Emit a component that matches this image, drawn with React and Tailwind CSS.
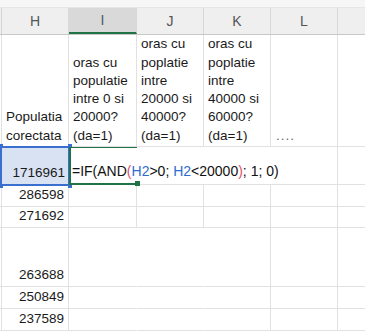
const cols = [
  { key: "H", w: "w-[67px]" },
  { key: "I", w: "w-[68px]" },
  { key: "J", w: "w-[67px]" },
  { key: "K", w: "w-[67px]" },
  { key: "L", w: "w-[67px]" },
];

const headerText = {
  H: ["Populatia", "corectata"],
  I: ["oras cu", "populatie", "intre 0 si", "20000?", "(da=1)"],
  J: ["oras cu", "poplatie", "intre", "20000 si", "40000?", "(da=1)"],
  K: ["oras cu", "poplatie", "intre", "40000 si", "60000?", "(da=1)"],
  L: ["...."],
};

const rows = [
  { h: "h-[22px]", v: "286598" },
  { h: "h-[21px]", v: "271692" },
  { h: "h-[59px]", v: "263688" },
  { h: "h-[22px]", v: "250849" },
  { h: "h-[22px]", v: "237589" },
];

function Cell({ w, h, className = "", children }) {
  return (
    <div
      className={`${w} ${h} shrink-0 border-r border-b border-[#e1e1e1] ${className}`}
    >
      {children}
    </div>
  );
}

export default function App() {
  return (
    <div className="w-[365px] h-[333px] overflow-hidden bg-white font-['Liberation_Sans',Arial,sans-serif] text-[13.5px] text-[#1a1a1a]">
      {/* top strip */}
      <div className="h-[8px] bg-[#f6f6f6] border-b border-[#e6e6e6]" />

      {/* column letters */}
      <div className="flex h-[27px] bg-[#efefef] border-b border-[#c8c8c8]">
        <div className="w-[2px] shrink-0 border-r border-[#d4d4d4]" />
        {cols.map((c) => (
          <div
            key={c.key}
            className={`${c.w} shrink-0 flex items-center justify-center border-r border-[#d8d8d8] text-[14px] ${
              c.key === "I"
                ? "bg-[#d9d9d9] text-[#4b5a6b] border-b-2 border-b-[#217346]"
                : "text-[#555]"
            }`}
          >
            {c.key}
          </div>
        ))}
        <div className="flex-1" />
      </div>

      {/* row 1: headings */}
      <div className="flex">
        <Cell w="w-[2px]" h="h-[112px]" />
        {cols.map((c) => (
          <Cell
            key={c.key}
            w={c.w}
            h="h-[112px]"
            className="flex flex-col justify-end px-[4px] pb-[1px] leading-[18.3px]"
          >
            {headerText[c.key].map((t, i) => (
              <div key={i} className={c.key === "L" ? "pl-[1px] text-[#666] tracking-[1px]" : ""}>
                {t}
              </div>
            ))}
          </Cell>
        ))}
        <Cell w="flex-1" h="h-[112px]" className="border-r-0" />
      </div>

      {/* row 2: formula */}
      <div className="flex">
        <Cell w="w-[2px]" h="h-[38px]" className="bg-[#c9d7ee]" />
        <div className="relative w-[67px] h-[38px] shrink-0 bg-[#d9e2f3] flex items-end justify-end pr-[4px] pb-[2px]">
          1716961
          <div className="absolute -left-[2px] -top-[1px] -right-[1px] -bottom-[1px] border-2 border-[#3a6fd0]" />
          <div className="absolute -left-[3px] -top-[3px] w-[4px] h-[4px] bg-[#3a6fd0]" />
          <div className="absolute -left-[3px] -bottom-[3px] w-[4px] h-[4px] bg-[#3a6fd0]" />
          <div className="absolute -right-[3px] -top-[3px] w-[4px] h-[4px] bg-[#3a6fd0]" />
          <div className="absolute -right-[3px] -bottom-[3px] w-[4px] h-[4px] bg-[#3a6fd0]" />
        </div>
        <div className="relative z-10 w-[68px] h-[38px] shrink-0 border-l-2 border-t border-b-2 border-[#217346] flex items-end pb-[1px] pl-[1px]">
          <span className="whitespace-nowrap text-[14px] text-[#111]">
            =IF(AND<span className="text-[#e0506a]">(</span>
            <span className="text-[#2f6ccf]">H2</span>&gt;0;{" "}
            <span className="text-[#2f6ccf]">H2</span>&lt;20000
            <span className="text-[#e0506a]">)</span>; 1; 0)
          </span>
          <div className="absolute -right-[3px] -bottom-[3px] w-[5px] h-[5px] bg-[#217346]" />
        </div>
        <div className="w-[67px] h-[38px] shrink-0 border-b border-[#e1e1e1]" />
        <div className="w-[67px] h-[38px] shrink-0 border-b border-[#e1e1e1]" />
        <Cell w="w-[67px]" h="h-[38px]" />
        <Cell w="flex-1" h="h-[38px]" className="border-r-0" />
      </div>

      {/* data rows */}
      {rows.map((r, ri) => (
        <div key={ri} className="flex">
          <Cell w="w-[2px]" h={r.h} />
          <Cell w="w-[67px]" h={r.h} className="flex items-end justify-end pr-[4px] pb-[1px]">
            {r.v}
          </Cell>
          <Cell w="w-[68px]" h={r.h} className={ri < 2 ? "" : "border-r-transparent"} />
          <Cell w="w-[67px]" h={r.h} className={ri < 2 ? "" : "border-r-transparent"} />
          <Cell w="w-[67px]" h={r.h} />
          <Cell w="w-[67px]" h={r.h} />
          <Cell w="flex-1" h={r.h} className="border-r-0" />
        </div>
      ))}
    </div>
  );
}
